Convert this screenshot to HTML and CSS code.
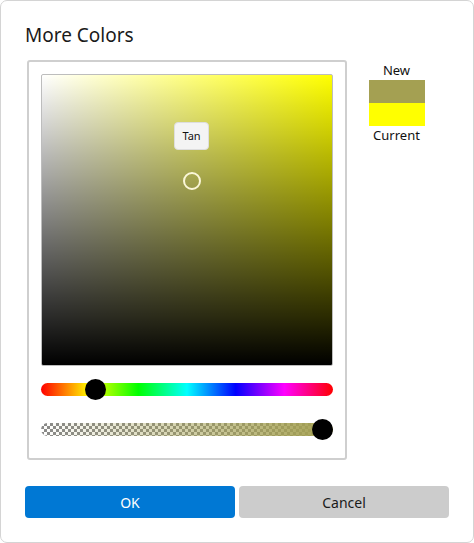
FILE: index.html
```html
<!DOCTYPE html>
<html>
<head>
<meta charset="utf-8">
<link rel="stylesheet" href="styles.css">
</head>
<body>
<div class="dialog">
  <h1 class="title">More Colors</h1>
  <div class="content">
    <div class="panel">
      <div class="spectrum">
        <div class="tip">Tan</div>
        <div class="picker"></div>
      </div>
      <div class="slider hue">
        <div class="thumb hue-thumb"></div>
      </div>
      <div class="slider alpha">
        <div class="alpha-fill"></div>
        <div class="thumb alpha-thumb"></div>
      </div>
    </div>
    <div class="preview">
      <div class="label">New</div>
      <div class="swatch new"></div>
      <div class="swatch current"></div>
      <div class="label">Current</div>
    </div>
  </div>
  <div class="buttons">
    <button class="btn primary">OK</button>
    <button class="btn secondary">Cancel</button>
  </div>
</div>
</body>
</html>
```

FILE: styles.css
```css
* { box-sizing: border-box; }
html, body { margin: 0; padding: 0; background: #ffffff; }
body {
  font-family: "Noto Sans", "Open Sans", sans-serif;
  color: #1a1a1a;
  width: 474px;
  height: 543px;
}
.dialog {
  width: 474px;
  height: 543px;
  border: 1px solid #d4d4d4;
  border-radius: 7px;
  padding: 0 24px;
  display: flex;
  flex-direction: column;
}
.title {
  margin: 20px 0 0 0;
  font-size: 19px;
  font-weight: 400;
  line-height: 28px;
  height: 28px;
}
.content {
  margin-top: 11px;
  display: flex;
  align-items: flex-start;
}
.panel {
  margin-left: 2px;
  width: 320px;
  height: 400px;
  border: 2px solid #cfcfcf;
  border-radius: 3px;
  padding: 12px;
  display: flex;
  flex-direction: column;
}
.spectrum {
  position: relative;
  width: 292px;
  height: 292px;
  border: 1px solid #bdbdbd;
  border-radius: 2px;
  background:
    linear-gradient(to bottom, rgba(0,0,0,0), #000000),
    linear-gradient(to right, #ffffff, #ffff00);
}
.tip {
  position: absolute;
  left: 132px;
  top: 47px;
  width: 35px;
  height: 28px;
  background: #f4f4f4;
  border: 1px solid #dedede;
  border-radius: 4px;
  font-size: 11px;
  line-height: 26px;
  text-align: center;
  color: #111;
}
.picker {
  position: absolute;
  left: 141px;
  top: 97px;
  width: 18px;
  height: 18px;
  border: 2px solid #fbf7d8;
  border-radius: 50%;
}
.slider {
  position: relative;
  height: 13px;
  border-radius: 7px;
}
.hue {
  margin-top: 17px;
  background: linear-gradient(to right, #ff0000 0%, #ffff00 16.66%, #00ff00 33.33%, #00ffff 50%, #0000ff 66.66%, #ff00ff 83.33%, #ff0000 100%);
}
.alpha {
  margin-top: 27px;
  background-color: #ffffff;
  background-image: repeating-conic-gradient(#8a8a8a 0% 25%, #ffffff 0% 50%);
  background-size: 6px 6px;
}
.alpha-fill {
  position: absolute;
  inset: 0;
  border-radius: 7px;
  background: linear-gradient(to right, rgba(164,160,82,0), rgba(164,160,82,1));
}
.thumb {
  position: absolute;
  top: -4px;
  width: 21px;
  height: 21px;
  border-radius: 50%;
  background: #000000;
}
.hue-thumb { left: 44px; }
.alpha-thumb { left: 271px; }
.preview {
  margin-left: 21px;
  width: 57px;
  display: flex;
  flex-direction: column;
  align-items: center;
  margin-top: 1px;
}
.label {
  font-size: 13px;
  line-height: 19px;
  color: #111;
}
.swatch {
  width: 56px;
  height: 23px;
}
.new { background: #a4a052; }
.current { background: #ffff00; }
.buttons {
  margin-top: 26px;
  display: flex;
  gap: 4px;
}
.btn {
  width: 210px;
  height: 32px;
  border: none;
  border-radius: 4px;
  font-family: "Noto Sans", "Open Sans", sans-serif;
  font-size: 14px;
  padding: 0;
}
.primary { background: #0078d4; color: #ffffff; }
.secondary { background: #cccccc; color: #1a1a1a; }
```
